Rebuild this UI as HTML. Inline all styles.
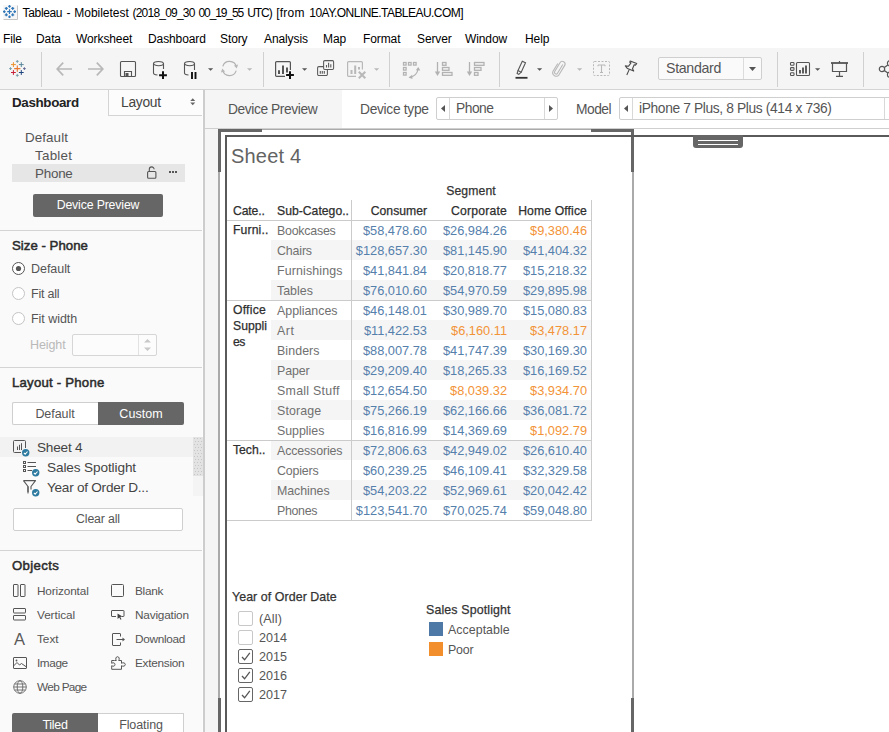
<!DOCTYPE html>
<html><head><meta charset="utf-8"><title>Tableau - Mobiletest</title>
<style>
*{box-sizing:border-box;margin:0;padding:0}
html,body{width:889px;height:732px;overflow:hidden;background:#fff}
body{position:relative;font-family:"Liberation Sans",sans-serif;color:#333;font-size:13px}
.a{position:absolute}
.t{position:absolute;white-space:nowrap;line-height:1}
svg{position:absolute;overflow:visible}
/* title + menu */
.tt{font-size:12px;color:#000}
.menu{top:33px;font-size:12px;color:#000;letter-spacing:-0.1px}
/* toolbar */
#toolbar{left:0;top:48px;width:889px;height:41px;background:#f5f5f5}
#tbline{left:0;top:89px;width:889px;height:1px;background:#d4d4d4}
.vsep{width:1px;background:#d0d0d0;top:52px;height:35px}
/* left panel */
#left{left:0;top:90px;width:203px;height:642px;background:#fafafa}
.hline{height:1px;background:#d4d4d4;left:0;width:203px}
.h{font-weight:normal;font-size:13.2px;color:#2b2b2b;-webkit-text-stroke:0.5px #2b2b2b}
.it{font-size:12.5px;color:#555}
.obj{font-size:11.8px;color:#555}
/* table */
.num{font-size:12.8px;text-align:right;width:80px}
.b{color:#5580ac}.o{color:#f39337}
.sub{font-size:12.4px;color:#707070;left:277px}
.cat{font-size:12.2px;color:#2e2e2e;left:233px;-webkit-text-stroke:0.250px #2e2e2e}
.m{-webkit-text-stroke:0.250px #333}
.band{left:271px;width:320px;height:20px;background:#f5f5f5}
.gl{background:#cbcbcb}
.cb{width:15px;height:15px;border:1px solid #666;border-radius:2px;background:#fff;left:238px}
.yr{font-size:12.6px;color:#555;left:259px}
</style></head><body>
<!-- TITLEBAR -->
<div id="titlebar">
<svg class="a" style="left:3px;top:5px" width="15" height="15" viewBox="0 0 15 15"><rect x="0" y="0" width="14" height="14" fill="#f7f7f7"/><path d="M14.500 0.500v14M0.500 14.500h14" stroke="#c4c4c4" stroke-width="1" fill="none"/><g stroke="#2f77b8" fill="none"><path d="M6.5 4.3v4.6M4.2 6.6h4.6" stroke-width="1.200"/><path d="M3.3 1.9v3.0M1.8 3.4h3.0M3.3 8.3v3.0M1.8 9.8h3.0M9.7 1.9v3.0M8.2 3.4h3.0M9.7 8.3v3.0M8.2 9.8h3.0" stroke-width="1.200"/><path d="M6.5 0.1v2.6M5.2 1.4h2.6M6.5 10.5v2.6M5.2 11.8h2.6M1.3 5.3v2.6M-0.0 6.6h2.6M11.7 5.3v2.6M10.4 6.6h2.6" stroke-width="1.200"/></g></svg>
<div class="t tt" style="left:22.6px;top:7px;letter-spacing:-0.350px">Tableau</div>
<div class="t tt" style="left:66.6px;top:7px;letter-spacing:-0.100px">-</div>
<div class="t tt" style="left:74.3px;top:7px;letter-spacing:-0.030px">Mobiletest</div>
<div class="t tt" style="left:132.5px;top:7px;letter-spacing:-0.785px">(2018_09_30</div>
<div class="t tt" style="left:198.5px;top:7px;letter-spacing:-1.111px">00_19_55</div>
<div class="t tt" style="left:247.2px;top:7px;letter-spacing:-1.068px">UTC)</div>
<div class="t tt" style="left:276.2px;top:7px;letter-spacing:0.231px">[from</div>
<div class="t tt" style="left:309.3px;top:7px;letter-spacing:-0.543px">10AY.ONLINE.TABLEAU.COM]</div>
</div>
<!-- MENU -->
<div id="menubar">
<div class="t menu" style="left:3px">File</div>
<div class="t menu" style="left:36px">Data</div>
<div class="t menu" style="left:76px">Worksheet</div>
<div class="t menu" style="left:148px">Dashboard</div>
<div class="t menu" style="left:220px">Story</div>
<div class="t menu" style="left:264px">Analysis</div>
<div class="t menu" style="left:323px">Map</div>
<div class="t menu" style="left:363px">Format</div>
<div class="t menu" style="left:417px">Server</div>
<div class="t menu" style="left:465px">Window</div>
<div class="t menu" style="left:525px">Help</div>
</div>
<!-- TOOLBAR -->
<div class="a" id="toolbar"></div>
<div class="a" id="tbline"></div>
<div id="tbicons">
<!-- tableau logo -->
<svg style="left:9px;top:60px" width="17" height="17" viewBox="0 0 17 17" fill="none" stroke-width="1">
<path d="M8.300 5.500v6.200M5.200 8.600h6.200" stroke="#e8762d" stroke-width="1.100"/>
<path d="M4.400 2.200v4.800M2 4.600h4.800" stroke="#eb912b"/>
<path d="M12.300 2.200v4.800M9.900 4.600h4.800" stroke="#59879b"/>
<path d="M4.400 10.100v4.800M2 12.500h4.800" stroke="#c72037"/>
<path d="M12.300 10.100v4.800M9.900 12.500h4.800" stroke="#1f457e"/>
<path d="M8.300 0v2.900M6.900 1.400h2.800M8.300 13.900v2.900M6.900 15.400h2.800" stroke="#7099a6" stroke-width="0.900"/>
<path d="M1.500 7.200v2.800M0.100 8.600h2.800" stroke="#7099a6" stroke-width="0.900"/><path d="M15.400 7.200v2.800M14 8.600h2.800" stroke="#5b6591" stroke-width="0.900"/>
</svg>
<div class="a vsep" style="left:41px"></div>
<!-- back / forward -->
<svg style="left:56px;top:62px" width="16" height="14" viewBox="0 0 16 14" fill="none" stroke="#b8b8b8" stroke-width="1.700"><path d="M16 7H1.500M7.200 0.600L1.200 7L7.200 13.400"/></svg>
<svg style="left:88px;top:62px" width="16" height="14" viewBox="0 0 16 14" fill="none" stroke="#b8b8b8" stroke-width="1.700"><path d="M0 7h14.500M8.800 0.600l6 6.400L8.800 13.400"/></svg>
<!-- save -->
<svg style="left:120px;top:61px" width="16" height="16" viewBox="0 0 16 16" fill="none" stroke="#555" stroke-width="1.1"><rect x="0.5" y="0.5" width="15" height="15" rx="1"/><path d="M4.5 15.5v-5h7v5"/><rect x="5.5" y="12" width="3" height="3.5" fill="#555" stroke="none"/></svg>
<!-- new datasource -->
<svg style="left:153px;top:61px" width="15" height="19" viewBox="0 0 15 19" fill="none" stroke="#555" stroke-width="1.1"><ellipse cx="5.5" cy="2.6" rx="5" ry="2.1"/><path d="M0.5 2.6v9.3c0 1 1.6 1.9 4 2.1M10.5 2.6v5.4"/><path d="M10 10.300v7.700M6.100 14.200h7.800" stroke="#111" stroke-width="2"/></svg>
<!-- pause -->
<svg style="left:184px;top:61px" width="15" height="19" viewBox="0 0 15 19" fill="none" stroke="#555" stroke-width="1.1"><ellipse cx="5.5" cy="2.6" rx="5" ry="2.1"/><path d="M0.5 2.6v9.3c0 1 1.6 1.9 4 2.1M10.5 2.6v6.4"/><path d="M8 11v7M11.500 11v7" stroke="#111" stroke-width="1.900"/></svg>
<svg style="left:208px;top:68px" width="5.200" height="2.900" viewBox="0 0 6 3"><path d="M0 0h6L3 3z" fill="#555"/></svg>
<!-- refresh -->
<svg style="left:221.200px;top:60px" width="17" height="17" viewBox="0 0 17 17" fill="none" stroke="#b2b2b2" stroke-width="1.150"><path d="M1.800 6.300A7 7 0 0 1 15.300 6.800M15.200 10.700A7 7 0 0 1 1.700 10.200"/><path d="M12.900 5.400l4.200-1-1.300 4.200zM4.100 11.600l-4.200 1 1.300-4.200z" fill="#b8b8b8" stroke="none"/></svg>
<svg style="left:247px;top:68px" width="5.200" height="2.900" viewBox="0 0 6 3"><path d="M0 0h6L3 3z" fill="#b8b8b8"/></svg>
<div class="a vsep" style="left:263px"></div>
<!-- new worksheet -->
<svg style="left:275px;top:61px" width="20" height="19" viewBox="0 0 20 19" fill="none" stroke="#555" stroke-width="1.2"><path d="M10 15.4H1.6a1 1 0 0 1-1-1V1.6a1 1 0 0 1 1-1h12.8a1 1 0 0 1 1 1V9"/><path d="M4 13V9.300M8 13V4.600M12 11.500V6.600" stroke-width="2"/><path d="M15 10.200v7.800M11.100 14.100h7.800" stroke="#111" stroke-width="2"/></svg>
<svg style="left:302px;top:68px" width="5.200" height="2.900" viewBox="0 0 6 3"><path d="M0 0h6L3 3z" fill="#555"/></svg>
<!-- duplicate -->
<svg style="left:317px;top:60px" width="18" height="16" viewBox="0 0 18 16" fill="none" stroke="#5a5a5a" stroke-width="1.050"><rect x="6.600" y="0.600" width="10" height="8.800" rx="1.200"/><path d="M6.600 6.600H1.800a1.200 1.200 0 0 0-1.200 1.200v6.400a1.200 1.200 0 0 0 1.200 1.200h7.400a1.200 1.200 0 0 0 1.200-1.200V9.400"/><path d="M9.500 7.500V5M11.600 7.500V2.800M13.800 7.500V4.300M3.300 13.800V11M5.300 13.800V11M7.300 13.800V11" stroke-width="1.100"/></svg>
<!-- clear sheet -->
<svg style="left:347px;top:61px" width="20" height="19" viewBox="0 0 20 19" fill="none" stroke="#b8b8b8" stroke-width="1.200"><path d="M9 15.400H1.600a1 1 0 0 1-1-1V1.600a1 1 0 0 1 1-1h12.800a1 1 0 0 1 1 1V8.500"/><path d="M4.500 13V9M8.200 13V4.500M12 8.500V6" stroke-width="2"/><path d="M11.800 10.800l6.500 6.500M18.300 10.800l-6.500 6.500" stroke-width="2"/></svg>
<svg style="left:374px;top:68px" width="5.200" height="2.900" viewBox="0 0 6 3"><path d="M0 0h6L3 3z" fill="#b8b8b8"/></svg>
<div class="a vsep" style="left:389px"></div>
<!-- swap -->
<svg style="left:403px;top:62px" width="18" height="17" viewBox="0 0 18 17" fill="none" stroke="#b2b2b2" stroke-width="1.250"><rect x="0.5" y="0.5" width="2.6" height="2.6"/><rect x="5.5" y="0.500" width="2.600" height="2.600"/><rect x="10.5" y="0.500" width="2.600" height="2.600"/><rect x="0.500" y="5.5" width="2.600" height="2.600"/><rect x="0.500" y="10.5" width="2.600" height="2.600"/><path d="M6.500 15.500C11.500 14.500 14.500 11.500 15.200 6.500" stroke-width="1.2"/><path d="M12.800 8.300l2.500-3.300 2 3.600zM9.300 12.800l-3.800 2.600 3.900 1.700z" fill="#b2b2b2" stroke="none"/></svg>
<!-- sort asc -->
<svg style="left:434px;top:62px" width="19" height="15" viewBox="0 0 19 15" fill="none" stroke="#b2b2b2" stroke-width="1.300"><path d="M3.500 0v11" stroke-width="1.3"/><path d="M0.800 9.500h5.400L3.500 14z" fill="#b2b2b2" stroke="none"/><rect x="8.500" y="0.500" width="3.500" height="2.800"/><rect x="8.500" y="5.500" width="6.500" height="2.800"/><rect x="8.500" y="10.500" width="9.500" height="2.800"/></svg>
<!-- sort desc -->
<svg style="left:466px;top:62px" width="19" height="15" viewBox="0 0 19 15" fill="none" stroke="#b2b2b2" stroke-width="1.300"><path d="M3.500 0v11" stroke-width="1.300"/><path d="M0.800 9.500h5.400L3.500 14z" fill="#b2b2b2" stroke="none"/><rect x="8.500" y="0.500" width="9.500" height="2.800"/><rect x="8.500" y="5.500" width="6.500" height="2.800"/><rect x="8.500" y="10.500" width="3.500" height="2.800"/></svg>
<div class="a vsep" style="left:499px"></div>
<!-- highlighter -->
<svg style="left:515px;top:60px" width="14" height="19" viewBox="0 0 14 19" fill="none" stroke="#555" stroke-width="1.100"><path d="M7.300 1.200l3.200 1.600-4.300 9.400-3.200-1.600z"/><path d="M3 10.600l-0.900 2.900 1.700 0.900 2.400-2.200"/><path d="M0.500 17.800h12" stroke="#333" stroke-width="1.800"/></svg>
<svg style="left:537px;top:68px" width="5.200" height="2.900" viewBox="0 0 6 3"><path d="M0 0h6L3 3z" fill="#555"/></svg>
<!-- paperclip -->
<svg style="left:552px;top:60px" width="14" height="17" viewBox="0 0 14 17" fill="none" stroke="#b8b8b8" stroke-width="1.100"><path d="M10.800 4.500L5.500 13.200a1.600 1.600 0 0 1-2.800-1.600L8 2.700a2.700 2.700 0 0 1 4.700 2.700L7 14.800a3.500 3.500 0 0 1-6-3.500L5.800 3.500"/></svg>
<svg style="left:577px;top:68px" width="5.200" height="2.900" viewBox="0 0 6 3"><path d="M0 0h6L3 3z" fill="#b8b8b8"/></svg>
<!-- T label -->
<svg style="left:593px;top:61px" width="17" height="15" viewBox="0 0 17 15" fill="none" stroke="#b8b8b8" stroke-width="1"><rect x="0.500" y="0.500" width="16" height="14" rx="1" stroke-dasharray="2 1.500"/><path d="M5 4h7M8.500 4v7.500M7 11.500h3M5 4v1.200M12 4v1.200" stroke-width="1.100"/></svg>
<!-- pin -->
<svg style="left:624px;top:60px" width="14" height="16" viewBox="0 0 14 16" fill="none" stroke="#4a4a4a" stroke-width="1.100" stroke-linejoin="round"><path d="M6.200 1l6.500 2.600-1.300 1.500-1.200-0.300-1.700 4 1.200 2.300-6.200-2.500-2.200-2.700 3.100 0.400 2.600-3.400-1.200-0.700z"/><path d="M5.200 9.600L2.800 15"/></svg>
<!-- Standard dropdown -->
<div class="a" style="left:658px;top:57px;width:104px;height:23px;border:1px solid #cfcfcf;border-radius:2px;background:#fafafa"></div>
<div class="a" style="left:743px;top:58px;width:1px;height:21px;background:#dcdcdc"></div>
<div class="t" style="left:666px;top:61px;font-size:14.200px;color:#555;letter-spacing:-0.312px">Standard</div>
<svg style="left:749px;top:67px" width="7" height="4" viewBox="0 0 7 4"><path d="M0 0h7L3.500 4z" fill="#555"/></svg>
<div class="a vsep" style="left:777px"></div>
<!-- show me cards -->
<svg style="left:790px;top:62px" width="21" height="14" viewBox="0 0 21 14" fill="none" stroke="#555" stroke-width="1.100"><rect x="0.500" y="0.500" width="3.500" height="2.800" rx="0.800"/><rect x="0.500" y="5.600" width="3.500" height="2.800" rx="0.800"/><rect x="0.500" y="10.700" width="3.500" height="2.800" rx="0.800"/><rect x="6.500" y="0.500" width="13" height="13" rx="1"/><path d="M10 11.500V8M13 11.500V5.500M16 11.500V3.500" stroke-width="1.900"/></svg>
<svg style="left:815px;top:68px" width="5.200" height="2.900" viewBox="0 0 6 3"><path d="M0 0h6L3 3z" fill="#555"/></svg>
<!-- presentation -->
<svg style="left:831px;top:61px" width="17" height="16" viewBox="0 0 17 16" fill="none" stroke="#555" stroke-width="1.200"><path d="M0 2h17" stroke-width="1.800"/><path d="M8.500 0v2M1.500 2v8.500h14V2M8.500 10.500v4.500M5 15.300h7"/></svg>
<div class="a vsep" style="left:863px"></div>
<!-- share -->
<svg style="left:878px;top:60px" width="18" height="18" viewBox="0 0 18 18" fill="none" stroke="#555" stroke-width="1.200"><circle cx="4" cy="9" r="2.700"/><circle cx="12" cy="3.300" r="2.600"/><circle cx="12" cy="14.700" r="2.600"/><path d="M6.300 7.600l3.500-2.700M6.300 10.400l3.500 2.700"/></svg>
</div>
<!-- LEFT -->
<div class="a" id="left"></div>
<div id="leftc">
<!-- tabs -->
<div class="a" style="left:108px;top:90px;width:95px;height:26px;background:#fcfcfc;border-left:1px solid #d4d4d4;border-bottom:1px solid #d4d4d4"></div>
<div class="t" style="left:12px;top:96px;font-size:13.400px;font-weight:bold;color:#222;letter-spacing:-0.350px">Dashboard</div>
<div class="t" style="left:121px;top:96px;font-size:13.800px;color:#444;letter-spacing:-0.273px">Layout</div>
<svg style="left:190px;top:98px" width="5.500" height="7.500" viewBox="0 0 6 9"><path d="M0 3.500L3 0.300 6 3.500zM0 5.500L3 8.700 6 5.500z" fill="#666"/></svg>
<!-- device list -->
<div class="t it" style="left:25px;top:131px;font-size:13.400px;letter-spacing:0.080px">Default</div>
<div class="t it" style="left:35px;top:149px;font-size:13.400px;letter-spacing:0.244px">Tablet</div>
<div class="a" style="left:12px;top:164px;width:173px;height:18px;background:#e6e6e6"></div>
<div class="t it" style="left:35px;top:167px;font-size:13.400px;letter-spacing:-0.227px">Phone</div>
<svg style="left:147px;top:166px" width="10" height="13" viewBox="0 0 10 13" fill="none" stroke="#555" stroke-width="1.100"><rect x="0.600" y="5.500" width="8.300" height="6.800" rx="1"/><path d="M2.300 5.500V3.300a2.400 2.400 0 0 1 4.800 0"/></svg>
<svg style="left:169px;top:171px" width="8" height="2" viewBox="0 0 8 2"><rect x="0" y="0" width="2" height="2" fill="#555"/><rect x="3" y="0" width="2" height="2" fill="#555"/><rect x="6" y="0" width="2" height="2" fill="#555"/></svg>
<div class="a" style="left:33px;top:194px;width:130px;height:23px;background:#666;border-radius:2px"></div>
<div class="t" style="left:33px;top:199px;width:130px;text-align:center;font-size:12.300px;color:#fff;letter-spacing:-0.154px">Device Preview</div>
<div class="a hline" style="top:230px"></div>
<!-- size -->
<div class="t h" style="left:12px;top:239px;letter-spacing:0.032px">Size - Phone</div>
<svg style="left:12px;top:262px" width="13" height="13" viewBox="0 0 13 13"><circle cx="6.5" cy="6.5" r="6" fill="#fff" stroke="#555" stroke-width="1"/><circle cx="6.5" cy="6.5" r="2.600" fill="#555"/></svg>
<div class="t it" style="left:31px;top:263px;letter-spacing:-0.044px">Default</div>
<svg style="left:12px;top:287px" width="13" height="13" viewBox="0 0 13 13"><circle cx="6.5" cy="6.5" r="6" fill="#fff" stroke="#c4c4c4" stroke-width="1"/></svg>
<div class="t it" style="left:31px;top:288px;letter-spacing:-0.211px">Fit all</div>
<svg style="left:12px;top:312px" width="13" height="13" viewBox="0 0 13 13"><circle cx="6.5" cy="6.5" r="6" fill="#fff" stroke="#c4c4c4" stroke-width="1"/></svg>
<div class="t it" style="left:31px;top:313px;letter-spacing:-0.039px">Fit width</div>
<div class="t it" style="left:30px;top:339px;color:#b9b9b9;letter-spacing:-0.090px">Height</div>
<div class="a" style="left:72px;top:334px;width:85px;height:22px;border:1px solid #d6d6d6;border-radius:2px;background:#fcfcfc"></div>
<div class="a" style="left:138px;top:335px;width:1px;height:20px;background:#e2e2e2"></div>
<svg style="left:144px;top:339px" width="7" height="12" viewBox="0 0 7 12"><path d="M0 3.500L3.500 0 7 3.500zM0 8.500L3.500 12 7 8.500z" fill="#c8c8c8"/></svg>
<div class="a hline" style="top:367px"></div>
<!-- layout -->
<div class="t h" style="left:12px;top:376px;letter-spacing:0.218px">Layout - Phone</div>
<div class="a" style="left:12px;top:402px;width:86px;height:23px;border:1px solid #cfcfcf;border-right:none;border-radius:2px 0 0 2px;background:#fff"></div>
<div class="a" style="left:98px;top:402px;width:86px;height:23px;background:#666;border-radius:0 2px 2px 0"></div>
<div class="t" style="left:12px;top:408px;width:86px;text-align:center;font-size:12.500px;color:#555;letter-spacing:-0.058px">Default</div>
<div class="t" style="left:98px;top:408px;width:86px;text-align:center;font-size:12.500px;color:#fff;letter-spacing:0.037px">Custom</div>
<div class="a" style="left:0;top:437px;width:193px;height:20px;background:#f2f2f2"></div>
<div class="a" style="z-index:2;left:193px;top:437px;width:10px;height:39px;background-color:#e3e3e3;background-image:radial-gradient(circle at 1.500px 1.500px,#c6c6c6 0.700px,transparent 1px),radial-gradient(circle at 3px 4.500px,#c6c6c6 0.700px,transparent 1px);background-size:3px 6px"></div>
<div class="a" style="z-index:2;left:193px;top:476px;width:10px;height:20px;background:#f4f4f4"></div>
<!-- sheet 4 icon -->
<svg style="left:13px;top:440px" width="13" height="13" viewBox="0 0 13 13" fill="none" stroke="#555" stroke-width="1"><path d="M8 12.500H1.500a1 1 0 0 1-1-1V1.500a1 1 0 0 1 1-1h10a1 1 0 0 1 1 1V8"/><path d="M4.500 10V6.500M6.500 10V4.800M8.500 10V3.200"/></svg>
<svg style="left:21.9px;top:448.7px" width="7.400" height="7.400" viewBox="0 0 8 8"><circle cx="4" cy="4" r="4" fill="#2c7a9f"/><path d="M2 4.200l1.400 1.400L6 2.700" fill="none" stroke="#fff" stroke-width="1.100"/></svg>
<div class="t" style="left:37px;top:441px;font-size:13.600px;color:#444;letter-spacing:-0.211px">Sheet 4</div>
<!-- legend icon -->
<svg style="left:23px;top:461px" width="13" height="11" viewBox="0 0 13 11" fill="none" stroke="#555" stroke-width="1"><rect x="0.500" y="0.500" width="2" height="2"/><rect x="0.500" y="4.500" width="2" height="2"/><rect x="0.500" y="8.500" width="2" height="2"/><path d="M4.500 1.500H13M4.500 5.500H13M4.500 9.500H9"/></svg>
<svg style="left:31.9px;top:468.7px" width="7.400" height="7.400" viewBox="0 0 8 8"><circle cx="4" cy="4" r="4" fill="#2c7a9f"/><path d="M2 4.200l1.400 1.400L6 2.700" fill="none" stroke="#fff" stroke-width="1.100"/></svg>
<div class="t" style="left:47px;top:461px;font-size:13.600px;color:#444;letter-spacing:-0.113px">Sales Spotlight</div>
<!-- filter icon -->
<svg style="left:23px;top:480px" width="13" height="14" viewBox="0 0 13 14" fill="none" stroke="#555" stroke-width="1.100" stroke-linejoin="round"><path d="M0.500 0.600h12L8 6.500v3M5 13V6.500z"/><path d="M5 6.500L0.500 0.600"/><path d="M5 6.500V12"/></svg>
<svg style="left:31.9px;top:488.5px" width="7.400" height="7.400" viewBox="0 0 8 8"><circle cx="4" cy="4" r="4" fill="#2c7a9f"/><path d="M2 4.200l1.400 1.400L6 2.700" fill="none" stroke="#fff" stroke-width="1.100"/></svg>
<div class="t" style="left:47px;top:481px;font-size:13.600px;color:#444;letter-spacing:-0.257px">Year of Order D...</div>
<div class="a" style="left:13px;top:508px;width:170px;height:23px;border:1px solid #cfcfcf;border-radius:2px;background:#fff"></div>
<div class="t" style="left:13px;top:513px;width:170px;text-align:center;font-size:12.300px;color:#555;letter-spacing:-0.145px">Clear all</div>
<div class="a hline" style="top:550px"></div>
<!-- objects -->
<div class="t h" style="left:12px;top:559px;letter-spacing:0.354px">Objects</div>
<svg style="left:13px;top:584px" width="13" height="13" viewBox="0 0 13 13" fill="none" stroke="#555" stroke-width="1"><rect x="0.500" y="0.500" width="4.500" height="12" rx="0.500"/><rect x="7.500" y="0.500" width="4.500" height="12" rx="0.500"/></svg>
<div class="t obj" style="left:37px;top:586px;letter-spacing:-0.151px">Horizontal</div>
<svg style="left:13px;top:608px" width="13" height="13" viewBox="0 0 13 13" fill="none" stroke="#555" stroke-width="1"><rect x="0.500" y="0.500" width="12" height="4.500" rx="0.500"/><rect x="0.500" y="7.500" width="12" height="4.500" rx="0.500"/></svg>
<div class="t obj" style="left:37px;top:610px;letter-spacing:-0.086px">Vertical</div>
<div class="t" style="left:14px;top:631px;font-size:16.500px;color:#5a5a5a">A</div>
<div class="t obj" style="left:37px;top:634px;letter-spacing:-0.035px">Text</div>
<svg style="left:13px;top:657px" width="14" height="12" viewBox="0 0 14 12" fill="none" stroke="#555" stroke-width="1"><rect x="0.500" y="0.500" width="13" height="11" rx="0.500"/><path d="M0.500 9l3.500-3.500 2.500 2.500 2-1.500 5 3.500"/><circle cx="3.500" cy="3.500" r="0.900" fill="#555" stroke="none"/></svg>
<div class="t obj" style="left:37px;top:658px;letter-spacing:-0.419px">Image</div>
<svg style="left:13px;top:680px" width="14" height="14" viewBox="0 0 14 14" fill="none" stroke="#606060" stroke-width="0.850"><circle cx="7" cy="7" r="6.300"/><ellipse cx="7" cy="7" rx="2.800" ry="6.300"/><path d="M0.700 7h12.600M1.500 4h11M1.500 10h11"/></svg>
<div class="t obj" style="left:37px;top:682px;letter-spacing:-0.672px">Web Page</div>
<svg style="left:111px;top:584px" width="13" height="13" viewBox="0 0 13 13" fill="none" stroke="#555" stroke-width="1"><rect x="0.500" y="0.500" width="12" height="12" rx="1"/></svg>
<div class="t obj" style="left:135px;top:586px;letter-spacing:-0.303px">Blank</div>
<svg style="left:111px;top:610px" width="14" height="11" viewBox="0 0 14 11" fill="none" stroke="#555" stroke-width="1"><path d="M5 6.500H1a0.500 0.500 0 0 1-0.500-0.500V1a0.500 0.500 0 0 1 0.500-0.500h11.500a0.500 0.500 0 0 1 0.500 0.500V6a0.500 0.500 0 0 1-0.500 0.500H11"/><path d="M6.500 3.500l5 3-2.200 0.500 1.200 2.300-1 0.500-1.200-2.300-1.700 1.500z" fill="#444" stroke="none"/></svg>
<div class="t obj" style="left:135px;top:610px;letter-spacing:-0.195px">Navigation</div>
<svg style="left:112px;top:633px" width="14" height="13" viewBox="0 0 14 13" fill="none" stroke="#555" stroke-width="1"><path d="M8.500 3.500V1a0.500 0.500 0 0 0-0.500-0.500H1a0.500 0.500 0 0 0-0.500 0.500V12a0.500 0.500 0 0 0 0.500 0.500H8a0.500 0.500 0 0 0 0.500-0.500V9.500"/><path d="M4.500 6.500H12"/><path d="M10.500 4.500l2.500 2-2.500 2z" fill="#555" stroke="none"/></svg>
<div class="t obj" style="left:135px;top:634px;letter-spacing:-0.296px">Download</div>
<svg style="left:111px;top:656px" width="15" height="14" viewBox="0 0 15 14" fill="none" stroke="#555" stroke-width="1" stroke-linejoin="round"><path d="M3.500 4.500h1.800C4.300 3 4.800 0.700 6.500 0.700S8.700 3 7.700 4.500h2.800v2.800c1.500-1 3.800-0.500 3.800 1.200s-2.300 2.200-3.800 1.200v3.600H0.700V9.700c1.500 1 3.300 0.500 3.300-1.200S2.200 6.300 0.700 7.300V4.500z"/></svg>
<div class="t obj" style="left:135px;top:658px;letter-spacing:-0.279px">Extension</div>
<!-- tiled / floating -->
<div class="a" style="left:12px;top:713px;width:86px;height:23px;background:#666;border-radius:2px 0 0 0"></div>
<div class="a" style="left:98px;top:713px;width:86px;height:23px;border:1px solid #cfcfcf;border-left:none;background:#fff"></div>
<div class="t" style="left:12px;top:719px;width:86px;text-align:center;font-size:12.500px;color:#fff;letter-spacing:-0.308px">Tiled</div>
<div class="t" style="left:98px;top:719px;width:86px;text-align:center;font-size:12.500px;color:#555;letter-spacing:-0.098px">Floating</div>
</div>
<!-- RIGHT -->
<div id="right">
<!-- panel split -->
<div class="a" style="left:202px;top:90px;width:1px;height:642px;background:#fdfdfd"></div>
<div class="a" style="left:203px;top:90px;width:2px;height:642px;background:#cdcdcd"></div>
<div class="a" style="left:205px;top:90px;width:684px;height:38px;background:#fff"></div>
<div class="a" style="left:205px;top:90px;width:137px;height:38px;background:#f5f5f5"></div>
<div class="a" style="left:205px;top:128px;width:684px;height:1px;background:#cfcfcf"></div>
<div class="a" style="left:205px;top:129px;width:13px;height:603px;background:#f5f5f5"></div>
<div class="t" style="left:228px;top:103px;font-size:13.800px;color:#555;letter-spacing:-0.420px">Device Preview</div>
<div class="t" style="left:360px;top:103px;font-size:13.800px;color:#555;letter-spacing:-0.318px">Device type</div>
<div class="a" style="left:436px;top:97px;width:122px;height:23px;border:1px solid #cfcfcf;border-radius:2px;background:#fff"></div>
<div class="a" style="left:449px;top:98px;width:1px;height:21px;background:#d8d8d8"></div>
<div class="a" style="left:544px;top:98px;width:1px;height:21px;background:#d8d8d8"></div>
<svg style="left:441px;top:105px" width="4" height="7" viewBox="0 0 4 7"><path d="M4 0v7L0 3.500z" fill="#555"/></svg>
<svg style="left:549px;top:105px" width="4" height="7" viewBox="0 0 4 7"><path d="M0 0v7l4-3.500z" fill="#555"/></svg>
<div class="t" style="left:456px;top:102px;font-size:13.800px;color:#555;letter-spacing:-0.481px">Phone</div>
<div class="t" style="left:576px;top:103px;font-size:13.800px;color:#555;letter-spacing:-0.496px">Model</div>
<div class="a" style="left:619px;top:97px;width:281px;height:23px;border:1px solid #cfcfcf;border-radius:2px;background:#fff"></div>
<div class="a" style="left:632px;top:98px;width:1px;height:21px;background:#d8d8d8"></div>
<div class="a" style="left:884px;top:98px;width:1px;height:21px;background:#d8d8d8"></div>
<svg style="left:624px;top:105px" width="4" height="7" viewBox="0 0 4 7"><path d="M4 0v7L0 3.500z" fill="#555"/></svg>
<div class="t" style="left:639px;top:102px;font-size:13.800px;color:#555;letter-spacing:-0.372px">iPhone 7 Plus, 8 Plus (414 x 736)</div>
<!-- phone frame -->
<div class="a" style="left:218px;top:129px;width:415px;height:1px;background:#aaa"></div>
<div class="a" style="left:218px;top:129px;width:2px;height:603px;background:#aaa"></div>
<div class="a" style="left:632px;top:129px;width:2px;height:603px;background:#aaa"></div>
<div class="a" style="left:218px;top:129px;width:44px;height:3px;background:#666"></div>
<div class="a" style="left:591px;top:129px;width:43px;height:3px;background:#666"></div>
<div class="a" style="left:218px;top:129px;width:3px;height:43px;background:#666"></div>
<div class="a" style="left:631px;top:129px;width:3px;height:43px;background:#666"></div>
<div class="a" style="left:218px;top:698px;width:3px;height:34px;background:#666"></div>
<div class="a" style="left:631px;top:698px;width:3px;height:34px;background:#666"></div>
<!-- dashboard frame -->
<div class="a" style="left:225px;top:135px;width:700px;height:2px;background:#5a5a5a"></div>
<div class="a" style="left:225px;top:135px;width:2px;height:600px;background:#5a5a5a"></div>
<div class="a" style="left:693px;top:135px;width:50px;height:13px;background:#666;border-radius:0 0 3px 3px"></div>
<div class="a" style="left:698px;top:140px;width:40px;height:1px;background:#fff"></div>
<div class="a" style="left:698px;top:144px;width:40px;height:1px;background:#fff"></div>
<!-- sheet -->
<div class="t" style="left:231px;top:146px;font-size:20px;color:#636363;letter-spacing:0.192px">Sheet 4</div>
<div class="t m" style="left:431px;top:185px;width:80px;text-align:center;font-size:12.200px;color:#333;letter-spacing:0.131px">Segment</div>
<div class="t cat" style="top:205px;letter-spacing:-0.122px">Cate..</div>
<div class="t cat" style="top:205px;left:277px;letter-spacing:0.014px">Sub-Catego..</div>
<div class="t cat" style="top:205px;left:347px;width:80px;text-align:right;letter-spacing:-0.002px">Consumer</div>
<div class="t cat" style="top:205px;left:427px;width:80px;text-align:right;letter-spacing:0.211px">Corporate</div>
<div class="t cat" style="top:205px;left:507px;width:80px;text-align:right;letter-spacing:0.117px">Home Office</div>
<div class="t cat" style="top:224px;letter-spacing:0.136px">Furni..</div>
<div class="t sub" style="top:225px;letter-spacing:-0.225px">Bookcases</div>
<div class="t num b" style="left:347px;top:225px">$58,478.60</div>
<div class="t num b" style="left:427px;top:225px">$26,984.26</div>
<div class="t num o" style="left:507px;top:225px">$9,380.46</div>
<div class="a band" style="top:240px"></div>
<div class="t sub" style="top:245px;letter-spacing:-0.152px">Chairs</div>
<div class="t num b" style="left:347px;top:245px">$128,657.30</div>
<div class="t num b" style="left:427px;top:245px">$81,145.90</div>
<div class="t num b" style="left:507px;top:245px">$41,404.32</div>
<div class="t sub" style="top:265px;letter-spacing:0.141px">Furnishings</div>
<div class="t num b" style="left:347px;top:265px">$41,841.84</div>
<div class="t num b" style="left:427px;top:265px">$20,818.77</div>
<div class="t num b" style="left:507px;top:265px">$15,218.32</div>
<div class="a band" style="top:280px"></div>
<div class="t sub" style="top:285px;letter-spacing:0.012px">Tables</div>
<div class="t num b" style="left:347px;top:285px">$76,010.60</div>
<div class="t num b" style="left:427px;top:285px">$54,970.59</div>
<div class="t num b" style="left:507px;top:285px">$29,895.98</div>
<div class="t cat" style="top:304px;letter-spacing:0.229px">Office</div>
<div class="t sub" style="top:305px;letter-spacing:-0.013px">Appliances</div>
<div class="t num b" style="left:347px;top:305px">$46,148.01</div>
<div class="t num b" style="left:427px;top:305px">$30,989.70</div>
<div class="t num b" style="left:507px;top:305px">$15,080.83</div>
<div class="a band" style="top:320px"></div>
<div class="t cat" style="top:320px;letter-spacing:0.018px">Suppli</div>
<div class="t sub" style="top:325px;letter-spacing:0.519px">Art</div>
<div class="t num b" style="left:347px;top:325px">$11,422.53</div>
<div class="t num o" style="left:427px;top:325px">$6,160.11</div>
<div class="t num o" style="left:507px;top:325px">$3,478.17</div>
<div class="t cat" style="top:336px;letter-spacing:-0.487px">es</div>
<div class="t sub" style="top:345px;letter-spacing:0.083px">Binders</div>
<div class="t num b" style="left:347px;top:345px">$88,007.78</div>
<div class="t num b" style="left:427px;top:345px">$41,747.39</div>
<div class="t num b" style="left:507px;top:345px">$30,169.30</div>
<div class="a band" style="top:360px"></div>
<div class="t sub" style="top:365px;letter-spacing:-0.136px">Paper</div>
<div class="t num b" style="left:347px;top:365px">$29,209.40</div>
<div class="t num b" style="left:427px;top:365px">$18,265.33</div>
<div class="t num b" style="left:507px;top:365px">$16,169.52</div>
<div class="t sub" style="top:385px;letter-spacing:0.274px">Small Stuff</div>
<div class="t num b" style="left:347px;top:385px">$12,654.50</div>
<div class="t num o" style="left:427px;top:385px">$8,039.32</div>
<div class="t num o" style="left:507px;top:385px">$3,934.70</div>
<div class="a band" style="top:400px"></div>
<div class="t sub" style="top:405px;letter-spacing:0.142px">Storage</div>
<div class="t num b" style="left:347px;top:405px">$75,266.19</div>
<div class="t num b" style="left:427px;top:405px">$62,166.66</div>
<div class="t num b" style="left:507px;top:405px">$36,081.72</div>
<div class="t sub" style="top:425px;letter-spacing:-0.029px">Supplies</div>
<div class="t num b" style="left:347px;top:425px">$16,816.99</div>
<div class="t num b" style="left:427px;top:425px">$14,369.69</div>
<div class="t num o" style="left:507px;top:425px">$1,092.79</div>
<div class="a band" style="top:440px"></div>
<div class="t cat" style="top:444px;letter-spacing:-0.019px">Tech..</div>
<div class="t sub" style="top:445px;letter-spacing:-0.127px">Accessories</div>
<div class="t num b" style="left:347px;top:445px">$72,806.63</div>
<div class="t num b" style="left:427px;top:445px">$42,949.02</div>
<div class="t num b" style="left:507px;top:445px">$26,610.40</div>
<div class="t sub" style="top:465px;letter-spacing:-0.172px">Copiers</div>
<div class="t num b" style="left:347px;top:465px">$60,239.25</div>
<div class="t num b" style="left:427px;top:465px">$46,109.41</div>
<div class="t num b" style="left:507px;top:465px">$32,329.58</div>
<div class="a band" style="top:480px"></div>
<div class="t sub" style="top:485px;letter-spacing:-0.054px">Machines</div>
<div class="t num b" style="left:347px;top:485px">$54,203.22</div>
<div class="t num b" style="left:427px;top:485px">$52,969.61</div>
<div class="t num b" style="left:507px;top:485px">$20,042.42</div>
<div class="t sub" style="top:505px;letter-spacing:-0.322px">Phones</div>
<div class="t num b" style="left:347px;top:505px">$123,541.70</div>
<div class="t num b" style="left:427px;top:505px">$70,025.74</div>
<div class="t num b" style="left:507px;top:505px">$59,048.80</div>
<div class="a gl" style="left:227px;top:220px;width:365px;height:1px"></div>
<div class="a gl" style="left:227px;top:300px;width:365px;height:1px"></div>
<div class="a gl" style="left:227px;top:440px;width:365px;height:1px"></div>
<div class="a gl" style="left:227px;top:520px;width:365px;height:1px"></div>
<div class="a gl" style="left:351px;top:200px;width:1px;height:321px"></div>
<div class="a gl" style="left:591px;top:200px;width:1px;height:321px"></div>
<!-- filter -->
<div class="t m" style="left:232px;top:591px;font-size:12.400px;color:#333;letter-spacing:0.070px">Year of Order Date</div>
<div class="a cb" style="top:611px;border-color:#c8c8c8"></div><div class="t yr" style="top:613px;letter-spacing:0.122px">(All)</div>
<div class="a cb" style="top:630px;border-color:#c8c8c8"></div><div class="t yr" style="top:632px">2014</div>
<div class="a cb" style="top:649px"><svg style="left:2px;top:2px" width="10" height="9" viewBox="0 0 10 9"><path d="M1 5l2.600 2.800L8.800 0.800" fill="none" stroke="#555" stroke-width="1.300"/></svg></div><div class="t yr" style="top:651px">2015</div>
<div class="a cb" style="top:668px"><svg style="left:2px;top:2px" width="10" height="9" viewBox="0 0 10 9"><path d="M1 5l2.600 2.800L8.800 0.800" fill="none" stroke="#555" stroke-width="1.300"/></svg></div><div class="t yr" style="top:670px">2016</div>
<div class="a cb" style="top:687px"><svg style="left:2px;top:2px" width="10" height="9" viewBox="0 0 10 9"><path d="M1 5l2.600 2.800L8.800 0.800" fill="none" stroke="#555" stroke-width="1.300"/></svg></div><div class="t yr" style="top:689px">2017</div>
<!-- legend -->
<div class="t m" style="left:426px;top:604px;font-size:12.400px;color:#333;letter-spacing:0.135px">Sales Spotlight</div>
<div class="a" style="left:429px;top:622px;width:14px;height:14px;background:#4e79a7"></div>
<div class="t" style="left:448px;top:624px;font-size:12.400px;color:#555;letter-spacing:0.039px">Acceptable</div>
<div class="a" style="left:429px;top:642px;width:14px;height:14px;background:#f28e2b"></div>
<div class="t" style="left:448px;top:644px;font-size:12.400px;color:#555;letter-spacing:-0.172px">Poor</div>
</div>
</body></html>
